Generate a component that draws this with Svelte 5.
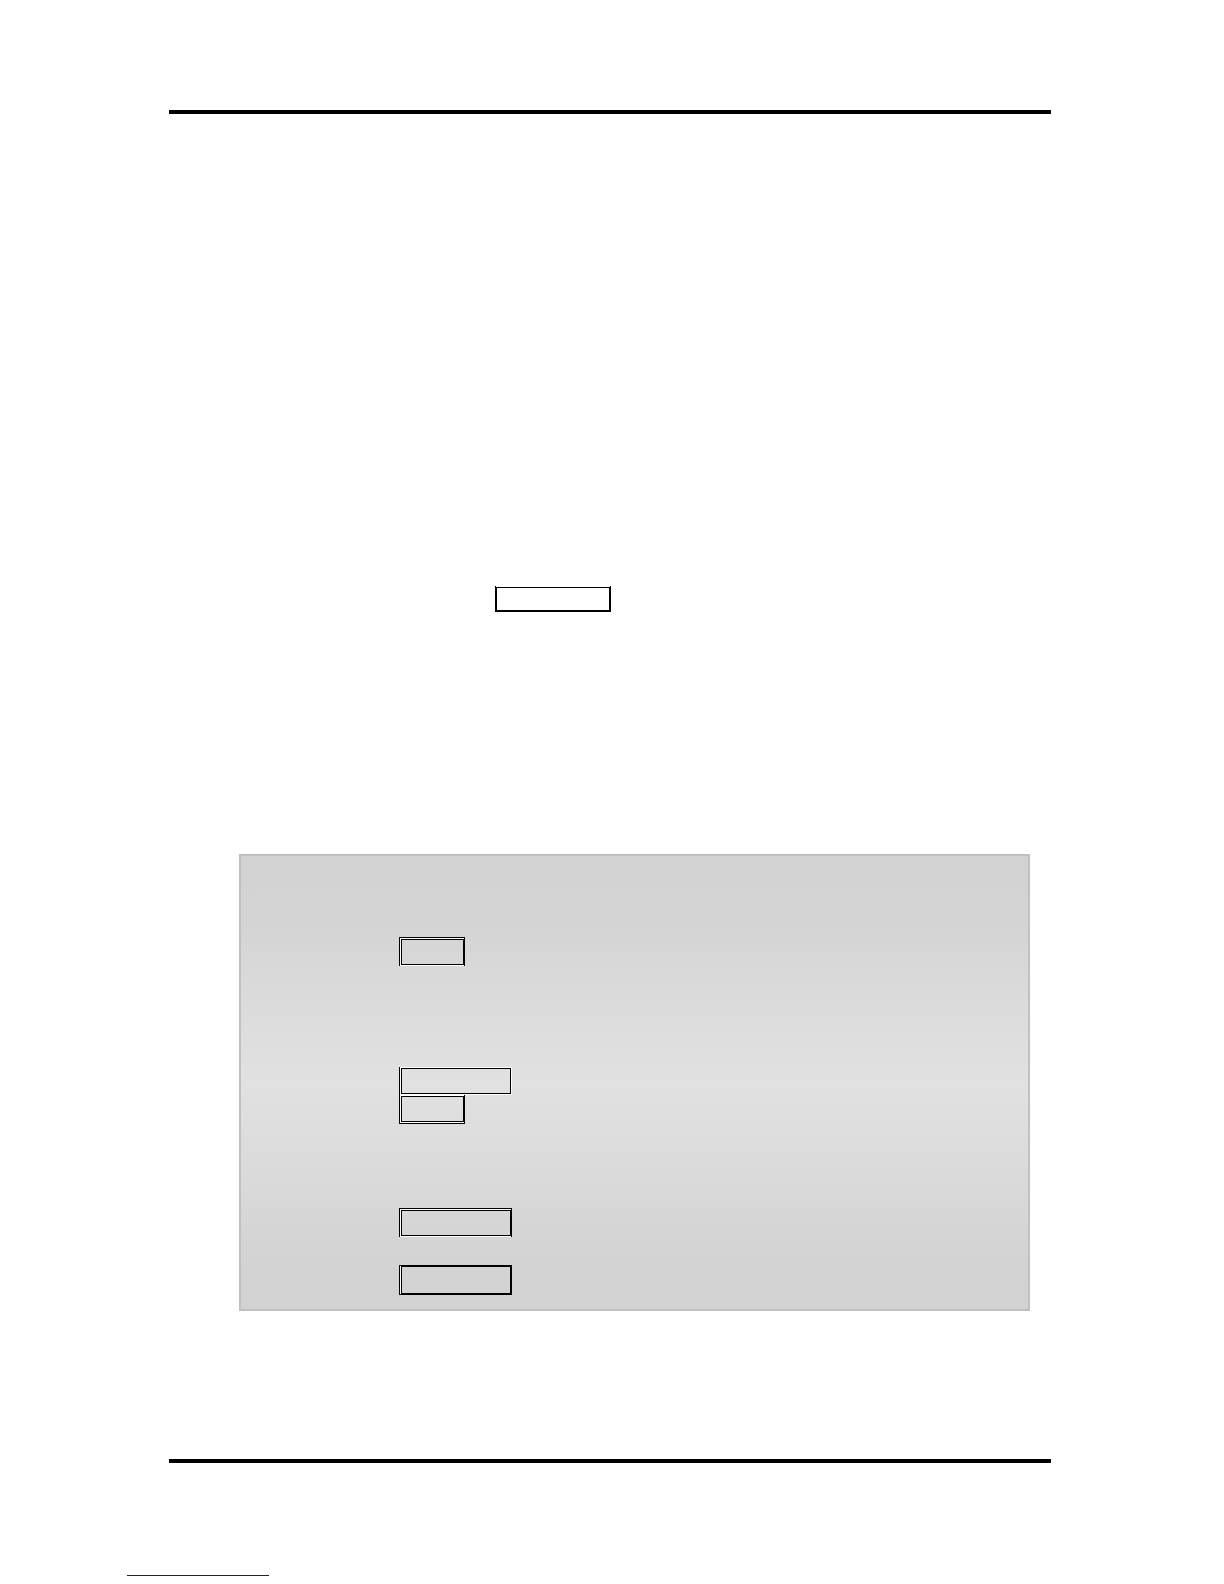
<script lang="ts">
  type Frame = { size: 'short' | 'long'; edge: string };

  const groups: Frame[][] = [
    [{ size: 'short', edge: 'open-bottom' }],
    [
      { size: 'long', edge: 'left-only' },
      { size: 'short', edge: 'open-top' }
    ],
    [{ size: 'long', edge: 'open-bottom' }],
    [{ size: 'long', edge: 'closed' }]
  ];
</script>

<div class="page">
  <main class="sheet">
    <div class="key"><div class="key-inner"></div></div>

    <section class="panel">
      {#each groups as group}
        <div class="group">
          {#each group as frame}
            <div class="frame {frame.size} {frame.edge}">
              <div class="gap"><div class="inner"></div></div>
            </div>
          {/each}
        </div>
      {/each}
    </section>
  </main>

  <footer>
    <div class="underline"></div>
  </footer>
</div>

<style>
  :global(body) {
    margin: 0;
    background: #fff;
    font-family: 'Liberation Sans', Arial, sans-serif;
  }

  .page {
    padding: 110px 0 8px;
  }

  .sheet {
    margin: 0 173px 0 169px;
    padding: 472px 21px 148px 70px;
    border-top: 4px solid #000;
    border-bottom: 4px solid #000;
  }

  .key {
    box-sizing: border-box;
    width: 116px;
    height: 26px;
    margin-left: 256px;
    padding-top: 1px;
    border: 1px solid #000;
    border-top: 0;
  }

  .key-inner {
    box-sizing: border-box;
    height: 100%;
    border: 1px solid #000;
  }

  .panel {
    margin-top: 242px;
    padding: 81px 0 14px 158px;
    border: 2px solid #c0c0c0;
    background: linear-gradient(#d2d2d2, #d4d4d4 15%, #dcdcdc 35%, #e1e1e1 50%, #dcdcdc 65%, #d3d3d3 88%, #d2d2d2);
  }

  .group:nth-child(2) {
    margin-top: 101px;
  }

  .group:nth-child(3) {
    margin-top: 84px;
  }

  .group:nth-child(4) {
    margin-top: 28px;
  }

  .frame {
    box-sizing: border-box;
    border: 1px solid #000;
  }

  .short {
    width: 66px;
  }

  .long {
    width: 113px;
  }

  /* white line between the outer and the inner rule */
  .gap {
    border: 1px solid #fff;
    border-right: 0;
  }

  .inner {
    box-sizing: border-box;
    height: 26px;
    border: 1px solid #000;
  }

  .open-bottom {
    border-bottom: 0;
  }

  .open-top {
    border-top: 0;
  }

  .left-only {
    border-width: 0 0 0 1px;
  }

  .left-only .gap {
    border-right: 1px solid #fff;
  }

  .closed .gap {
    border-width: 0 0 0 1px;
  }

  .closed .inner {
    height: 28px;
  }

  footer {
    padding: 112px 0 0 127px;
  }

  .underline {
    width: 142px;
    border-bottom: 1px solid #141490;
  }
</style>
